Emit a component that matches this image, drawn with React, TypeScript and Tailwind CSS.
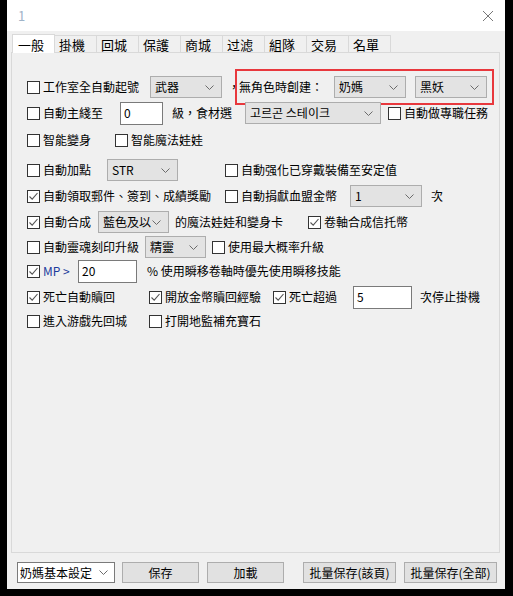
const Chevron = () => (
  <svg width="9" height="5" viewBox="0 0 9 5" className="shrink-0">
    <path d="M0.5 0.5 L4.5 4.5 L8.5 0.5" fill="none" stroke="#6b6b6b" strokeWidth="1" />
  </svg>
);

const Check = ({ checked = false, label, className = "" }: { checked?: boolean; label: React.ReactNode; className?: string }) => (
  <div className={`flex items-center gap-[3px] shrink-0 ${className}`}>
    <span className="w-[13px] h-[13px] border border-[#333] bg-white flex items-center justify-center shrink-0">
      {checked && (
        <svg width="11" height="11" viewBox="0 0 11 11">
          <path d="M1.5 5.5 L4.2 8.2 L9.5 2" fill="none" stroke="#555" strokeWidth="1.1" />
        </svg>
      )}
    </span>
    <span className="whitespace-nowrap">{label}</span>
  </div>
);

const Select = ({ value, className = "" }: { value: string; className?: string }) => (
  <div className={`h-[22px] shrink-0 flex items-center justify-between border border-[#adadad] bg-[#e3e3e3] pl-[4px] pr-[7px] ${className}`}>
    <span className="whitespace-nowrap">{value}</span>
    <Chevron />
  </div>
);

const Input = ({ value, className = "" }: { value: string; className?: string }) => (
  <div className={`h-[23px] shrink-0 flex items-center border border-[#7a7a7a] bg-white pl-[3px] ${className}`}>
    {value}
  </div>
);

const Button = ({ label, className = "" }: { label: string; className?: string }) => (
  <div className={`h-[21px] shrink-0 flex items-center justify-center border border-[#adadad] bg-[#e1e1e1] ${className}`}>
    {label}
  </div>
);

const TABS = ["一般", "掛機", "回城", "保護", "商城", "过滤", "組隊", "交易", "名單"];

export default function App() {
  return (
    <div className="w-[513px] h-[596px] bg-black font-['Noto_Sans_CJK_TC','Microsoft_JhengHei',sans-serif] text-[12px] text-black leading-none">
      <div className="ml-[7px] w-[498px] h-[589px] bg-[#f0f0f0] flex flex-col">
        {/* title bar */}
        <div className="h-[31px] bg-white flex items-center justify-between pl-[11px] pr-[11px]">
          <span className="text-[#9fb3c8] text-[13px]">1</span>
          <svg width="12" height="12" viewBox="0 0 12 12">
            <path d="M1 1 L11 11 M11 1 L1 11" stroke="#777" strokeWidth="1" />
          </svg>
        </div>

        {/* tabs */}
        <div className="flex items-end h-[20px] mt-[1px] pl-[5px]">
          {TABS.map((t, i) => (
            <div
              key={t}
              className={
                i === 0
                  ? "w-[43px] h-[19px] bg-white border border-b-0 border-[#d9d9d9] pl-[5px] pt-[3px] text-[13px] relative -mb-px z-10"
                  : "w-[42px] h-[17px] border border-l-0 border-b-0 border-[#d9d9d9] pl-[4px] pt-[2px] text-[13px]"
              }
            >
              {t}
            </div>
          ))}
        </div>

        {/* tab panel */}
        <div className="ml-[4px] w-[489px] h-[501px] border border-[#d9d9d9] pl-[15px] pt-[22px] flex flex-col">
          {/* row 1 */}
          <div className="flex items-center h-[24px]">
            <Check label="工作室全自動起號" className="w-[123px]" />
            <Select value="武器" className="w-[72px]" />
            <div className="w-[13px] shrink-0 pl-[6px] overflow-visible whitespace-nowrap">，</div>
            <div className="w-[259px] h-[36px] -my-[6px] border-2 border-[#e8383d] flex items-center pl-[2px] shrink-0">
              <span className="w-[95px] shrink-0 whitespace-nowrap">無角色時創建：</span>
              <Select value="奶媽" className="w-[72px]" />
              <Select value="黑妖" className="w-[72px] ml-[9px]" />
            </div>
          </div>

          {/* row 2 */}
          <div className="flex items-center h-[24px] mt-[2px]">
            <Check label="自動主綫至" className="w-[93px]" />
            <Input value="0" className="w-[43px]" />
            <span className="w-[82px] shrink-0 pl-[9px] whitespace-nowrap">級，食材選</span>
            <Select value="고르곤 스테이크" className="w-[136px] font-['Noto_Sans_CJK_KR',sans-serif]" />
            <Check label="自動做專職任務" className="ml-[7px]" />
          </div>

          {/* row 3 */}
          <div className="flex items-center h-[24px] mt-[3px]">
            <Check label="智能變身" className="w-[88px]" />
            <Check label="智能魔法娃娃" />
          </div>

          {/* row 4 */}
          <div className="flex items-center h-[24px] mt-[6px]">
            <Check label="自動加點" className="w-[80px]" />
            <Select value="STR" className="w-[71px]" />
            <Check label="自動强化已穿戴裝備至安定值" className="ml-[47px]" />
          </div>

          {/* row 5 */}
          <div className="flex items-center h-[24px] mt-[2px]">
            <Check checked label="自動領取郵件、簽到、成績獎勵" className="w-[198px]" />
            <Check label="自動捐獻血盟金幣" className="w-[125px]" />
            <Select value="1" className="w-[72px]" />
            <span className="pl-[9px]">次</span>
          </div>

          {/* row 6 */}
          <div className="flex items-center h-[24px] mt-[2px]">
            <Check checked label="自動合成" className="w-[71px]" />
            <Select value="藍色及以" className="w-[71px]" />
            <span className="w-[139px] shrink-0 pl-[6px] whitespace-nowrap">的魔法娃娃和變身卡</span>
            <Check checked label="卷軸合成信托幣" />
          </div>

          {/* row 7 */}
          <div className="flex items-center h-[24px] mt-[1px]">
            <Check label="自動靈魂刻印升級" className="w-[118px]" />
            <Select value="精靈" className="w-[61px]" />
            <Check label="使用最大概率升級" className="ml-[6px]" />
          </div>

          {/* row 8 */}
          <div className="flex items-center h-[24px]">
            <Check checked label={<span className="text-[#1c3c9c]">MP &gt;</span>} className="w-[51px]" />
            <Input value="20" className="w-[59px]" />
            <span className="pl-[10px] whitespace-nowrap">% 使用瞬移卷軸時優先使用瞬移技能</span>
          </div>

          {/* row 9 */}
          <div className="flex items-center h-[24px] mt-[2px]">
            <Check checked label="死亡自動贖回" className="w-[122px]" />
            <Check checked label="開放金幣贖回經驗" className="w-[124px]" />
            <Check checked label="死亡超過" className="w-[80px]" />
            <Input value="5" className="w-[59px]" />
            <span className="pl-[8px] whitespace-nowrap">次停止掛機</span>
          </div>

          {/* row 10 */}
          <div className="flex items-center h-[24px]">
            <Check label="進入游戲先回城" className="w-[122px]" />
            <Check label="打開地監補充寶石" />
          </div>
        </div>

        {/* bottom bar */}
        <div className="flex items-center mt-[9px] pl-[10px]">
          <div className="w-[98px] h-[21px] shrink-0 flex items-center justify-between border border-[#7a7a7a] bg-white pl-[2px] pr-[6px]">
            <span className="whitespace-nowrap">奶媽基本設定</span>
            <Chevron />
          </div>
          <Button label="保存" className="w-[77px] ml-[7px]" />
          <Button label="加載" className="w-[77px] ml-[8px]" />
          <Button label="批量保存(該頁)" className="w-[93px] ml-[19px]" />
          <Button label="批量保存(全部)" className="w-[93px] ml-[8px]" />
        </div>
      </div>
    </div>
  );
}
